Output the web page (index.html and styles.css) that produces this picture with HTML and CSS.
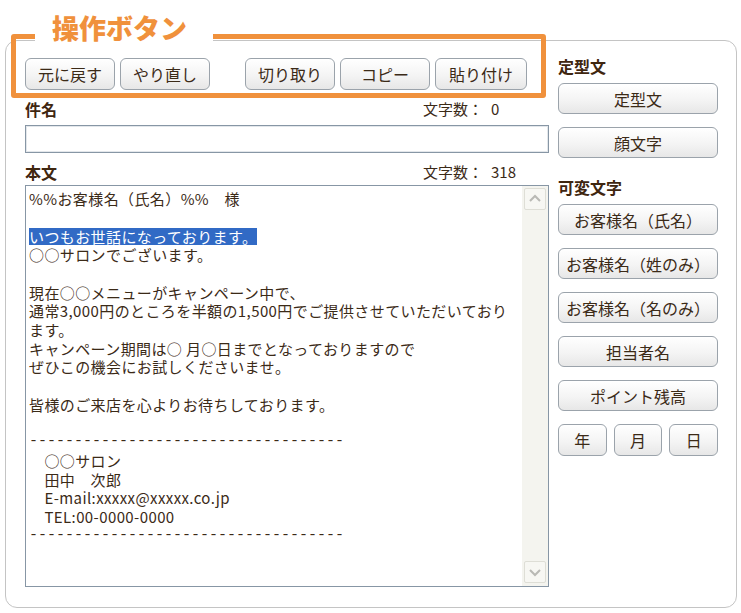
FILE: index.html
```html
<!DOCTYPE html>
<html lang="ja">
<head>
    <meta charset="UTF-8">
    <meta name="viewport" content="width=device-width, initial-scale=1.0">
    <title>メール作成</title>
    <link rel="stylesheet" href="styles.css">
</head>
<body>
    <div class="page">
        <div class="panel">
            <div class="main">
                <div class="toolbar">
                    <button class="btn">元に戻す</button>
                    <button class="btn">やり直し</button>
                    <button class="btn btn-split">切り取り</button>
                    <button class="btn">コピー</button>
                    <button class="btn btn-wide">貼り付け</button>
                </div>

                <div class="field-head">
                    <span class="label">件名</span>
                    <span class="count">文字数：<span class="num">0</span></span>
                </div>
                <div class="input"></div>

                <div class="field-head field-head-body">
                    <span class="label">本文</span>
                    <span class="count">文字数：<span class="num">318</span></span>
                </div>
                <div class="textarea">
                    <div class="text">%%お客様名（氏名）%%　様

<span class="sel">いつもお世話になっております。</span>
○○サロンでございます。

現在○○メニューがキャンペーン中で、
通常3,000円のところを半額の1,500円でご提供させていただいております。
キャンペーン期間は○ 月○日までとなっておりますので
ぜひこの機会にお試しくださいませ。

皆様のご来店を心よりお待ちしております。

<span class="rule">-----------------------------------</span>
　○○サロン
　田中　次郎
　E-mail:xxxxx@xxxxx.co.jp
　TEL:00-0000-0000
<span class="rule">-----------------------------------</span></div>
                    <div class="scrollbar">
                        <span class="arrow">
                            <svg width="20" height="18" viewBox="0 0 20 18"><polyline points="5,11 10,6 15,11" fill="none" stroke="#b9b9b4" stroke-width="2"/></svg>
                        </span>
                        <span class="arrow">
                            <svg width="20" height="18" viewBox="0 0 20 18"><polyline points="5,7 10,12 15,7" fill="none" stroke="#b9b9b4" stroke-width="2"/></svg>
                        </span>
                    </div>
                </div>
            </div>

            <div class="side">
                <div class="side-label">定型文</div>
                <button class="btn side-btn">定型文</button>
                <button class="btn side-btn">顔文字</button>

                <div class="side-label side-label-gap">可変文字</div>
                <button class="btn side-btn">お客様名（氏名）</button>
                <button class="btn side-btn">お客様名（姓のみ）</button>
                <button class="btn side-btn">お客様名（名のみ）</button>
                <button class="btn side-btn">担当者名</button>
                <button class="btn side-btn">ポイント残高</button>
                <div class="date-row">
                    <button class="btn">年</button>
                    <button class="btn">月</button>
                    <button class="btn">日</button>
                </div>
            </div>
        </div>

        <!-- 注釈の枠 -->
        <div class="callout">
            <span class="callout-title">操作ボタン</span>
        </div>
    </div>
</body>
</html>
```

FILE: styles.css
```css
body {
    margin: 0;
    background: #fff;
    font-family: "Noto Sans CJK JP", "Noto Sans", sans-serif;
    color: #3b2a17;
}
.page {
    position: relative;
    padding: 40px 0 0 5px;
}
.panel {
    display: flex;
    box-sizing: border-box;
    width: 732px;
    height: 568px;
    padding: 17px 18px 0 19px;
    border: 1px solid #c4c4c4;
    border-radius: 12px;
    background: #fff;
}
.main {
    width: 524px;
}
.toolbar {
    display: flex;
    gap: 5px;
    height: 32px;
}
.btn {
    box-sizing: border-box;
    padding: 0;
    font-family: "Noto Sans CJK JP", sans-serif;
    font-size: 16px;
    color: #3b2a17;
    background: linear-gradient(#ffffff, #f4f4f4 55%, #e7e7e7);
    border: 1px solid #9ba3ab;
    border-radius: 6px;
    box-shadow: inset 0 1px 0 #fff;
    cursor: pointer;
}
.toolbar .btn {
    width: 90px;
    height: 32px;
}
.toolbar .btn-split {
    margin-left: 30px;
}
.toolbar .btn-wide {
    width: 92px;
}
.field-head {
    display: flex;
    justify-content: space-between;
    height: 24px;
    line-height: 24px;
    margin-top: 7px;
}
.field-head-body {
    margin-top: 7px;
}
.label {
    font-size: 16px;
    font-weight: bold;
    color: #3f2610;
}
.count {
    width: 126px;
    font-size: 15px;
}
.count .num {
    margin-left: 8px;
}
.input {
    box-sizing: border-box;
    height: 28px;
    margin-top: 4px;
    border: 1px solid #8796a5;
    box-shadow: inset 0 0 0 1px #e3e7eb;
    background: #fff;
}
.textarea {
    display: flex;
    box-sizing: border-box;
    height: 402px;
    margin-top: 1px;
    border: 1px solid #8796a5;
    background: #fff;
}
.text {
    flex: 1;
    padding: 4px 2px 0 3px;
    font-size: 15px;
    letter-spacing: 0.4px;
    line-height: 18.7px;
    white-space: pre-wrap;
    overflow: hidden;
}
.sel {
    display: inline-block;
    line-height: 17px;
    vertical-align: top;
    margin-top: 1px;
    background: #316ac5;
    color: #fff;
}
.rule {
    font-family: "Liberation Mono", monospace;
    letter-spacing: 0;
    vertical-align: top;
}
.scrollbar {
    display: flex;
    flex-direction: column;
    justify-content: space-between;
    width: 26px;
    padding: 2px 2px 3px;
    box-sizing: border-box;
    background: #f4f4ef;
}
.arrow {
    display: flex;
    align-items: center;
    justify-content: center;
    height: 20px;
    border: 1px solid #deded6;
    border-radius: 2px;
    background: #f7f7f3;
}
.side {
    display: flex;
    flex-direction: column;
    width: 160px;
    margin-left: 9px;
}
.side-label {
    height: 20px;
    line-height: 20px;
    margin-top: -2px;
    margin-bottom: 7px;
    font-size: 16px;
    font-weight: bold;
    color: #3f2610;
}
.side-label-gap {
    margin-top: 6px;
    margin-bottom: 7px;
}
.side-btn {
    height: 31px;
    margin-bottom: 13px;
}
.date-row {
    display: grid;
    grid-template-columns: repeat(3, 1fr);
    gap: 7px;
}
.date-row .btn {
    height: 32px;
}
.callout {
    position: absolute;
    left: 11px;
    top: 34px;
    box-sizing: border-box;
    width: 535px;
    height: 64px;
    border: 5px solid #f0913c;
    border-radius: 3px;
}
.callout-title {
    position: absolute;
    left: 19px;
    top: -26px;
    padding: 0 26px 0 17px;
    background: #fff;
    font-size: 27px;
    font-weight: 900;
    line-height: 30px;
    color: #f0913c;
}
```
